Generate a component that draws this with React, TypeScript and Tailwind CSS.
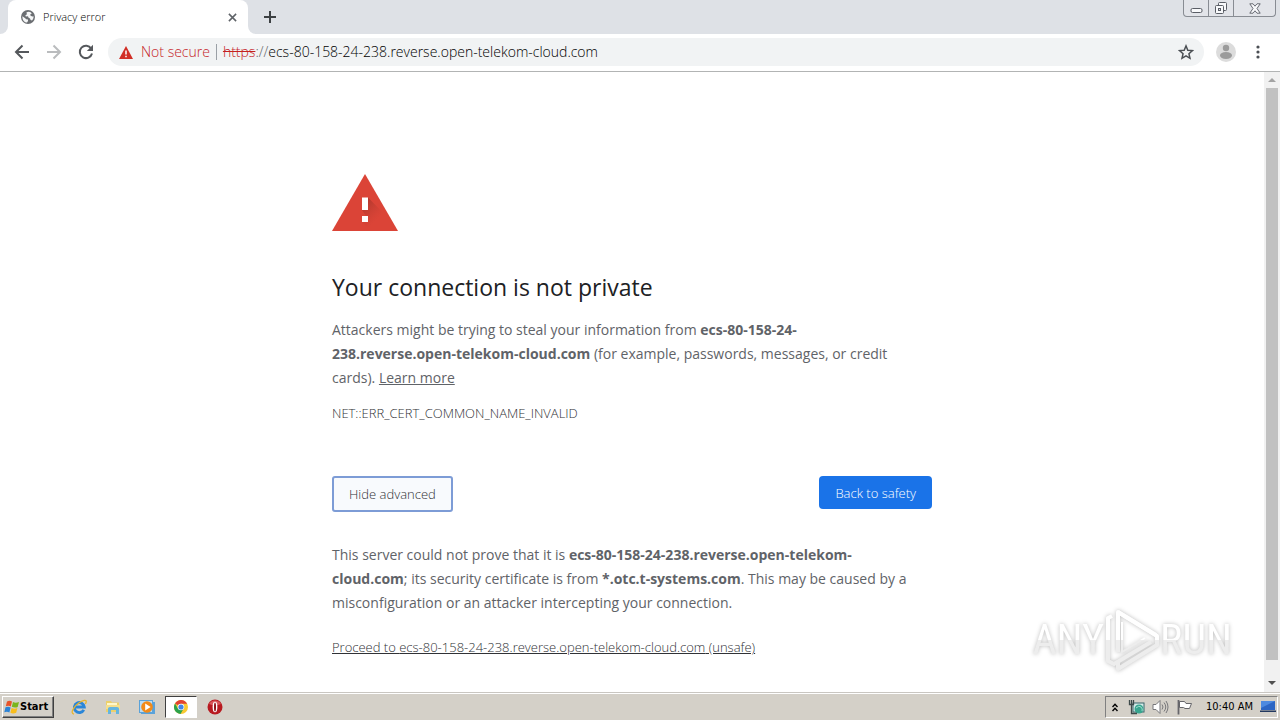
import type { ReactNode } from 'react';

const HOST = 'ecs-80-158-24-238.reverse.open-telekom-cloud.com';

function GlobeIcon() {
  return (
    <svg viewBox="0 0 14 14" className="size-3.5 shrink-0" aria-hidden="true">
      <circle cx="7" cy="7" r="7" fill="#6b6e72" />
      <path
        d="M1.4 6.2 4.2 8.2 5.2 9.2 7 9.6 7 11 6 12.6C3.2 12.2 1.2 9.8 1.4 6.2ZM5.4 2.6C6.4 1.6 8.4 1.3 9.6 2.3L10.8 3.4 9.2 4.6 9.6 5.8 11.4 6.6 12.5 6.3C12.7 7.8 12.2 9.4 11 10.6L9.6 10 9 8.4 7.4 7.6 7 6.2 4.8 6.6 4.4 5.2 6 4.2Z"
        fill="#f4f5f6"
      />
    </svg>
  );
}

function TabStrip() {
  return (
    <header className="flex h-[34px] shrink-0 items-start bg-[#dee1e6]">
      <div className="flex h-full w-2 items-end bg-white">
        <div className="h-full w-full rounded-br-lg bg-[#dee1e6]" />
      </div>
      <div className="flex h-full w-60 items-center rounded-t-lg bg-white pr-2.5 pl-[13px]">
        <GlobeIcon />
        <span className="ml-2 flex-1 text-[11px] font-light text-black">Privacy error</span>
        <button aria-label="Close tab" className="flex size-3 items-center justify-center">
          <svg viewBox="0 0 10 10" className="size-[9px]" aria-hidden="true">
            <path d="M1 1 9 9M9 1 1 9" stroke="#5f6368" strokeWidth="1.7" />
          </svg>
        </button>
      </div>
      <div className="h-full w-2 bg-white">
        <div className="h-full w-full rounded-bl-lg bg-[#dee1e6]" />
      </div>
      <button aria-label="New tab" className="flex h-full w-7 items-center justify-center">
        <svg viewBox="0 0 12 12" className="size-3" aria-hidden="true">
          <path d="M6 0V12M0 6H12" stroke="#3c4043" strokeWidth="2" />
        </svg>
      </button>
      <div className="mr-1 ml-auto flex h-[17px] rounded-b border border-t-0 border-[#888c93] bg-[#e2e4e9]">
        <button aria-label="Minimize" className="flex w-[25px] items-center justify-center border-r border-[#888c93]">
          <svg viewBox="0 0 13 12" className="h-3 w-[13px]" aria-hidden="true">
            <rect x="1" y="6.5" width="11" height="4" rx="1.5" fill="#f8f9fb" stroke="#5a5e66" />
          </svg>
        </button>
        <button aria-label="Restore" className="flex w-[25px] items-center justify-center border-r border-[#888c93]">
          <svg viewBox="0 0 14 14" className="size-3.5" aria-hidden="true">
            <rect x="4.5" y="1.5" width="8" height="8" rx="1" fill="#f8f9fb" stroke="#5a5e66" />
            <rect x="1.5" y="4.5" width="8" height="8" rx="1" fill="#f8f9fb" stroke="#5a5e66" />
            <rect x="4.5" y="7.5" width="2" height="2" fill="#e2e4e9" stroke="#5a5e66" />
          </svg>
        </button>
        <button aria-label="Close" className="flex w-[41px] items-center justify-center">
          <svg viewBox="0 0 12 11" className="h-[11px] w-3" aria-hidden="true">
            <path
              d="M.8.8H4L6 3.2 8 .8H11.2L8 5.5 11.2 10.2H8L6 7.8 4 10.2H.8L4 5.5Z"
              fill="#f8f9fb"
              stroke="#5a5e66"
              strokeWidth=".9"
            />
          </svg>
        </button>
      </div>
    </header>
  );
}

function Toolbar() {
  return (
    <nav className="flex h-[38px] shrink-0 items-center border-b border-[#b2b4b4] bg-white pb-px">
      <button aria-label="Back" className="ml-1.5 flex size-8 items-center justify-center">
        <svg viewBox="0 0 16 16" className="size-4" aria-hidden="true">
          <path d="M15 8H2.5M8.5 1.5 2 8l6.5 6.5" fill="none" stroke="#55585c" strokeWidth="2" />
        </svg>
      </button>
      <button aria-label="Forward" className="flex size-8 items-center justify-center">
        <svg viewBox="0 0 16 16" className="size-4" aria-hidden="true">
          <path d="M1 8H13.5M7.5 1.5 14 8l-6.5 6.5" fill="none" stroke="#babcbe" strokeWidth="2" />
        </svg>
      </button>
      <button aria-label="Reload" className="flex size-8 items-center justify-center">
        <svg viewBox="0 0 16 16" className="size-4" aria-hidden="true">
          <path d="M13.2 4.5A6.2 6.2 0 1 0 14 9.5" fill="none" stroke="#55585c" strokeWidth="2" />
          <path d="M15 .8V7H8.8Z" fill="#55585c" />
        </svg>
      </button>
      <div className="ml-1.5 flex h-7 flex-1 items-center rounded-full bg-[#f1f3f4] pr-2.5 pl-[11px] text-sm font-light">
        <svg viewBox="0 0 14 13" className="h-[13px] w-3.5 shrink-0" aria-hidden="true">
          <path d="M7 0 14 13H0Z" fill="#d12f26" />
          <path d="M7 4.5V8.5M7 9.7V11.2" stroke="#fff" strokeWidth="1.5" />
        </svg>
        <span className="ml-2 text-[#c5221f]">Not secure</span>
        <span className="mx-1.5 h-4 w-px bg-[#9aa0a6]" />
        <span className="text-[#c5221f] line-through">https</span>
        <span className="text-[#5f6368]">://</span>
        <input
          aria-label="Address"
          defaultValue={HOST}
          className="min-w-0 flex-1 bg-transparent text-black outline-none"
        />
        <button aria-label="Bookmark this page">
          <svg viewBox="0 0 24 24" className="size-4" aria-hidden="true">
            <path
              d="M12 2.8l2.7 6.5 7 .6-5.3 4.6 1.6 6.9-6-3.7-6 3.7 1.6-6.9L2.3 9.900l7-.6z"
              fill="none"
              stroke="#4b4f54"
              strokeWidth="2.2"
            />
          </svg>
        </button>
      </div>
      <button aria-label="Profile" className="ml-3">
        <svg viewBox="0 0 20 20" className="size-5" aria-hidden="true">
          <circle cx="10" cy="10" r="10" fill="#dcdcdc" />
          <circle cx="10" cy="6" r="3.2" fill="#9b9b9b" />
          <ellipse cx="10" cy="13.5" rx="6" ry="3.4" fill="#9b9b9b" />
        </svg>
      </button>
      <button aria-label="Menu" className="mr-3 ml-3 flex w-5 justify-center">
        <svg viewBox="0 0 4 14" className="h-3.5 w-1" aria-hidden="true">
          <circle cx="2" cy="2" r="1.6" fill="#4b4f54" />
          <circle cx="2" cy="7" r="1.6" fill="#4b4f54" />
          <circle cx="2" cy="12" r="1.6" fill="#4b4f54" />
        </svg>
      </button>
    </nav>
  );
}

function WarningIcon() {
  return (
    <svg viewBox="0 0 66 57" className="h-[57px] w-[66px]" aria-hidden="true">
      <defs>
        <linearGradient id="warnShade" gradientUnits="userSpaceOnUse" x1="32" y1="30" x2="50" y2="48">
          <stop offset="0" stopColor="#a8352b" stopOpacity=".75" />
          <stop offset=".8" stopColor="#c53f33" stopOpacity="0" />
        </linearGradient>
      </defs>
      <path d="M33 0 66 57H0Z" fill="#db4437" />
      <path d="M36 23.5 56 44 60 57H39L30 48V42H34L30 36Z" fill="url(#warnShade)" />
      <path d="M30 23.5h6v12.5h-6zM30 42h6v6h-6z" fill="#fff" />
    </svg>
  );
}

function WatermarkWord({ children }: { children: ReactNode }) {
  return (
    <span className="bg-linear-to-b from-white from-50% to-[#ededed] to-50% bg-clip-text text-transparent">
      {children}
    </span>
  );
}

function Watermark() {
  return (
    <div
      aria-hidden="true"
      className="pointer-events-none absolute right-12 bottom-5 flex items-center font-['Roboto_Condensed','Open_Sans_Condensed','Liberation_Sans_Narrow','Liberation_Sans',sans-serif] text-[42px] leading-none [filter:drop-shadow(0_0_2px_#bcbcbc)]"
    >
      <WatermarkWord>ANY</WatermarkWord>
      <svg viewBox="0 0 56 64" className="h-16 w-14">
        <defs>
          <linearGradient id="markTone" gradientUnits="userSpaceOnUse" x1="0" y1="0" x2="0" y2="64">
            <stop offset=".5" stopColor="#fff" />
            <stop offset=".5" stopColor="#ededed" />
          </linearGradient>
        </defs>
        <g fill="none" stroke="url(#markTone)" strokeWidth="4" strokeLinejoin="round">
          <path d="M8 8 4 10V53L10 56 47 34" />
          <path d="M14 44V4L52 27" />
          <path d="M18 14V44L41 30" strokeWidth="2" />
          <path d="M14 55V61L53 37V28L14 4" />
        </g>
      </svg>
      <WatermarkWord>RUN</WatermarkWord>
    </div>
  );
}

function Scrollbar() {
  return (
    <div aria-hidden="true" className="flex w-4 shrink-0 flex-col items-center bg-[#f1f1f1]">
      <div className="flex h-4 items-center">
        <svg viewBox="0 0 8 4" className="h-1 w-2">
          <path d="M4 0 8 4H0Z" fill="#a3a3a3" />
        </svg>
      </div>
      <div className="w-3 flex-1 bg-[#c1c1c1]" />
      <div className="flex h-8 items-end pb-[7px]">
        <svg viewBox="0 0 8 4" className="h-1 w-2">
          <path d="M0 0H8L4 4Z" fill="#505050" />
        </svg>
      </div>
    </div>
  );
}

function Interstitial() {
  return (
    <main className="min-w-0 flex-1 overflow-hidden pt-[102px]">
      <div className="mx-auto max-w-[600px] text-sm leading-6 text-[#5f6368]">
        <WarningIcon />
        <h1 className="mt-10 text-[23px] leading-8 text-[#202124]">Your connection is not private</h1>
        <p className="mt-[15px]">
          Attackers might be trying to steal your information from <b>ecs-80-158-24-</b>
          <br />
          <b>238.reverse.open-telekom-cloud.com</b> (for example, passwords, messages, or credit
          <br />
          cards).{' '}
          <a href="#learn" className="underline">
            Learn more
          </a>
        </p>
        <p className="mt-[11px] text-[13px] leading-6 font-light text-[#303236]">NET::ERR_CERT_COMMON_NAME_INVALID</p>
        <div className="mt-[51px] flex items-start justify-between text-[13px] font-light">
          <button className="h-9 rounded-[3px] border-2 border-[#7d9cd6] bg-[#f8fafd] px-[15px] text-[#303236]">
            Hide advanced
          </button>
          <button className="h-[33px] rounded bg-[#1a73e8] px-4 text-white">Back to safety</button>
        </div>
        <p className="mt-[31px]">
          This server could not prove that it is <b>ecs-80-158-24-238.reverse.open-telekom-</b>
          <br />
          <b>cloud.com</b>; its security certificate is from <b>*.otc.t-systems.com</b>. This may be caused by a
          <br />
          misconfiguration or an attacker intercepting your connection.
        </p>
        <a href="#proceed" className="mt-5 inline-block text-[13px] leading-6 font-light text-[#303236] underline">
          Proceed to {HOST} (unsafe)
        </a>
      </div>
    </main>
  );
}

function TaskButton({ label, active = false, children }: { label: string; active?: boolean; children: ReactNode }) {
  return (
    <button
      aria-label={label}
      className={
        active
          ? 'flex h-[22px] w-8 items-center justify-center border border-t-[#404040] border-r-white border-b-white border-l-[#404040] bg-white'
          : 'flex h-[22px] w-8 items-center justify-center'
      }
    >
      <svg viewBox="0 0 16 16" className="size-4" aria-hidden="true">
        {children}
      </svg>
    </button>
  );
}

function Taskbar() {
  return (
    <footer className="flex h-7 shrink-0 items-center border-t border-[#c9c6c1] bg-[#d4d0c8] pt-px font-['DejaVu_Sans_Condensed','DejaVu_Sans',sans-serif] text-[11px] text-black shadow-[inset_0_1px_0_#fff]">
      <button className="ml-0.5 flex h-[22px] w-[52px] items-center border border-t-white border-r-[#404040] border-b-[#404040] border-l-white pl-px font-bold shadow-[inset_-1px_-1px_0_#808080]">
        <svg viewBox="0 0 16 16" className="size-4 shrink-0" aria-hidden="true">
          <path d="M3 2.5Q5.5 1 8 2.5L6.8 7.5Q4.5 6 1.8 7.3Z" fill="#e8542a" />
          <path d="M9 3Q11.5 4.5 15 3L13.7 8Q11 9.2 7.8 7.8Z" fill="#7ab51d" />
          <path d="M1.5 8.3Q4.3 7 6.6 8.5L5.4 13.5Q3 12 .3 13.3Z" fill="#2b83d6" />
          <path d="M7.6 8.9Q10.5 10.3 13.4 9L12.2 13.8Q9 15.2 6.4 13.8Z" fill="#f8bd1c" />
        </svg>
        <span>Start</span>
      </button>
      <div className="ml-[9px] flex items-center gap-0.5">
        <TaskButton label="Internet Explorer">
          <path d="M12.8 10.8A5 5 0 1 1 13.3 8H4" fill="none" stroke="#2a86d8" strokeWidth="2.8" />
          <path
            d="M3 15C-1.5 14.5 3 7 8.5 3.5 12 1.2 15.5 .5 15.2 2.8 15.1 3.6 14.8 4.2 14.3 5"
            fill="none"
            stroke="#e9b52c"
            strokeWidth="1.3"
          />
        </TaskButton>
        <TaskButton label="File Explorer">
          <path d="M1 2h5l1 1.5h7V13H1Z" fill="#ecd06b" />
          <path d="M2 4h10v2H2Z" fill="#fff7c9" />
          <path d="M1 6h14v4H1Z" fill="#f5df8d" />
          <path d="M3 15V9.5Q3 8 5 8h7q2 0 2 1.5V15h-3v-4H6v4Z" fill="#65b5df" />
        </TaskButton>
        <TaskButton label="Media Player">
          <path d="M0 1h14v2h2v12H2v-1H0Z" fill="#5aa2d9" />
          <path d="M1 2h12v11H1Z" fill="#b9dcf4" />
          <circle cx="8" cy="8" r="5.8" fill="#f28a18" />
          <path d="M6.2 4.5 11.6 8l-5.4 3.5Z" fill="#fff" />
        </TaskButton>
        <TaskButton label="Chrome" active>
          <circle cx="8" cy="8" r="7" fill="#f9c932" />
          <path d="M8 8 2 4.4A7 7 0 0 1 14.1 4.7H8Z" fill="#e24233" />
          <path d="M8 8 5 9.8 2 4.4A7 7 0 0 0 7.5 15L10.7 9.5Z" fill="#2ba24c" />
          <circle cx="8" cy="8" r="3.3" fill="#fff" />
          <circle cx="8" cy="8" r="2.6" fill="#4285e8" />
        </TaskButton>
        <TaskButton label="Opera">
          <circle cx="8" cy="8" r="7.5" fill="#b81a20" />
          <path d="M2 5a7 7 0 0 1 12 0Q8 7.5 2 5Z" fill="#d9575a" />
          <ellipse cx="8" cy="8" rx="2.4" ry="5.3" fill="#fff" />
          <ellipse cx="8" cy="8" rx="1" ry="4.5" fill="#8d1015" />
        </TaskButton>
      </div>
      <div className="mr-0.5 ml-auto flex h-[22px] items-center border border-t-[#808080] border-r-white border-b-white border-l-[#808080] pr-px pl-1.5">
        <svg viewBox="0 0 6 9" className="h-[9px] w-1.5" aria-hidden="true">
          <path d="M.5 4 3 1.2 5.5 4M.5 8 3 5.2 5.5 8" fill="none" stroke="#000" strokeWidth="1.4" />
        </svg>
        <svg viewBox="0 0 17 16" className="ml-2.5 h-4 w-[17px]" aria-hidden="true">
          <rect x="5" y="4" width="11" height="9" fill="#d3ebe8" stroke="#39656b" />
          <circle cx="11" cy="10" r="4.5" fill="#37a58f" />
          <path d="M8 9q3-3 5-1t1 4" fill="none" stroke="#9fdccc" />
          <path d="M1.5 1V5.5H5.5V1M3.5 1V14.5H9" fill="none" stroke="#3e4a4a" strokeWidth="1.3" />
        </svg>
        <svg viewBox="0 0 17 16" className="ml-[7px] h-4 w-[17px]" aria-hidden="true">
          <path d="M1 5.5H4L8 1.5V14.5L4 10.5H1Z" fill="#fff" stroke="#77777a" />
          <path d="M10 5.5q2 2.5 0 5M12 3.5q3.5 4.5 0 9M14 2q4 6 0 12" fill="none" stroke="#77777a" />
        </svg>
        <svg viewBox="0 0 17 16" className="ml-[7px] h-4 w-[17px]" aria-hidden="true">
          <path d="M3.5 2.5H8.5L10 4.5H15.5L13.5 9.5H9L7.5 8.5H3.5Z" fill="#fff" stroke="#66666a" />
          <path d="M2.5 1V15.5" stroke="#66666a" strokeWidth="1.8" />
        </svg>
        <time className="ml-[13px]">10:40 AM</time>
        <svg viewBox="0 0 16 14" className="ml-[7px] h-3.5 w-4" aria-hidden="true">
          <path d="M1 1H15V10H1Z" fill="#2c66c4" />
          <path d="M1 1H15L1 8Z" fill="#4d8ae0" />
          <path d="M0 10.5H16V12H0Z" fill="#23395f" />
        </svg>
      </div>
    </footer>
  );
}

export default function App() {
  return (
    <div className="flex h-screen flex-col overflow-hidden bg-white font-['Open_Sans','Noto_Sans',sans-serif]">
      <TabStrip />
      <Toolbar />
      <div className="relative flex min-h-0 flex-1">
        <Interstitial />
        <Scrollbar />
        <Watermark />
      </div>
      <Taskbar />
    </div>
  );
}
